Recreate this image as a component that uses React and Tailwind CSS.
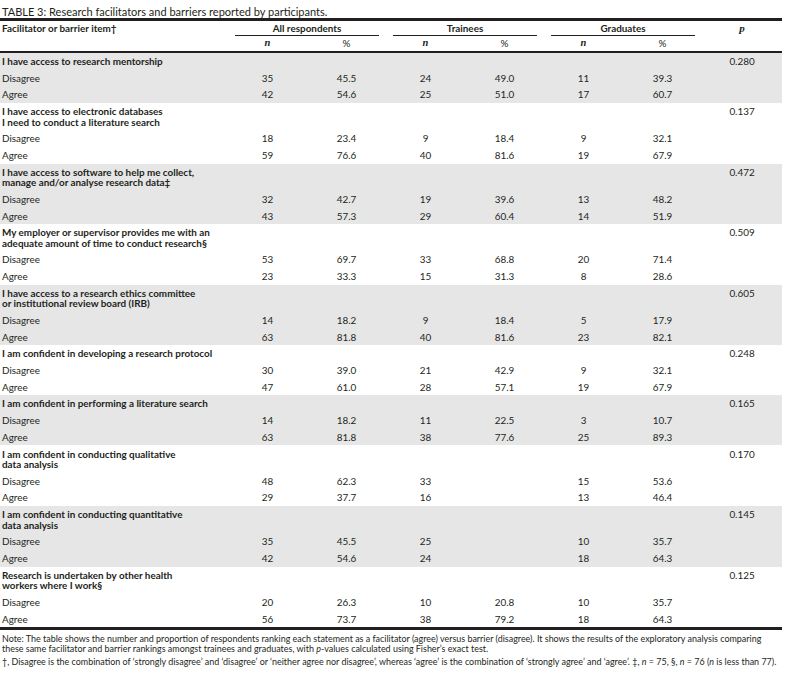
const items = [
  {
    title: ["I have access to research mentorship"],
    p: "0.280",
    disagree: ["35", "45.5", "24", "49.0", "11", "39.3"],
    agree: ["42", "54.6", "25", "51.0", "17", "60.7"],
  },
  {
    title: ["I have access to electronic databases", "I need to conduct a literature search"],
    p: "0.137",
    disagree: ["18", "23.4", "9", "18.4", "9", "32.1"],
    agree: ["59", "76.6", "40", "81.6", "19", "67.9"],
  },
  {
    title: ["I have access to software to help me collect,", "manage and/or analyse research data‡"],
    p: "0.472",
    disagree: ["32", "42.7", "19", "39.6", "13", "48.2"],
    agree: ["43", "57.3", "29", "60.4", "14", "51.9"],
  },
  {
    title: ["My employer or supervisor provides me with an", "adequate amount of time to conduct research§"],
    p: "0.509",
    disagree: ["53", "69.7", "33", "68.8", "20", "71.4"],
    agree: ["23", "33.3", "15", "31.3", "8", "28.6"],
  },
  {
    title: ["I have access to a research ethics committee", "or institutional review board (IRB)"],
    p: "0.605",
    disagree: ["14", "18.2", "9", "18.4", "5", "17.9"],
    agree: ["63", "81.8", "40", "81.6", "23", "82.1"],
  },
  {
    title: ["I am confident in developing a research protocol"],
    p: "0.248",
    disagree: ["30", "39.0", "21", "42.9", "9", "32.1"],
    agree: ["47", "61.0", "28", "57.1", "19", "67.9"],
  },
  {
    title: ["I am confident in performing a literature search"],
    p: "0.165",
    disagree: ["14", "18.2", "11", "22.5", "3", "10.7"],
    agree: ["63", "81.8", "38", "77.6", "25", "89.3"],
  },
  {
    title: ["I am confident in conducting qualitative", "data analysis"],
    p: "0.170",
    disagree: ["48", "62.3", "33", "", "15", "53.6"],
    agree: ["29", "37.7", "16", "", "13", "46.4"],
  },
  {
    title: ["I am confident in conducting quantitative", "data analysis"],
    p: "0.145",
    disagree: ["35", "45.5", "25", "", "10", "35.7"],
    agree: ["42", "54.6", "24", "", "18", "64.3"],
  },
  {
    title: ["Research is undertaken by other health", "workers where I work§"],
    p: "0.125",
    disagree: ["20", "26.3", "10", "20.8", "10", "35.7"],
    agree: ["56", "73.7", "38", "79.2", "18", "64.3"],
  },
];

const sans = "font-['Lato','Open_Sans',sans-serif]";
const serif = "font-['Liberation_Serif',serif] italic font-bold";

function ValueRow({ label, values, shaded }) {
  return (
    <tr className={shaded ? "bg-[#e6e6e6]" : ""}>
      <td className="pl-[2px] py-[3.1px]">{label}</td>
      {values.map((v, i) => (
        <td key={i} className="py-[3.1px] text-center">
          {v}
        </td>
      ))}
      <td className="py-[3.1px]"></td>
    </tr>
  );
}

export default function App() {
  return (
    <div className={`w-[788px] h-[674px] bg-white text-[#231f20] ${sans}`}>
      <div className="pl-[2px] pt-[5px] text-[11px] leading-[13px]">
        TABLE 3: Research facilitators and barriers reported by participants.
      </div>

      <table className="w-[782px] table-fixed border-collapse text-[9.9px] leading-[10.5px]">
        <colgroup>
          <col className="w-[228px]" />
          <col className="w-[79px]" />
          <col className="w-[79px]" />
          <col className="w-[79px]" />
          <col className="w-[79px]" />
          <col className="w-[79px]" />
          <col className="w-[79px]" />
          <col className="w-[80px]" />
        </colgroup>
        <thead className="border-t-[3px] border-b-2 border-[#231f20]">
          {/* Group headers */}
          <tr>
            <th rowSpan={2} className="pl-[2px] pt-[1.5px] text-left align-top font-bold">
              Facilitator or barrier item†
            </th>
            {["All respondents", "Trainees", "Graduates"].map((g) => (
              <th key={g} colSpan={2} className="pt-[1.5px] px-[7px] font-bold">
                <div className="border-b border-[#231f20] pb-[2px]">{g}</div>
              </th>
            ))}
            <th rowSpan={2} className={`pt-[1.5px] align-top text-center text-[11px] ${serif}`}>
              p
            </th>
          </tr>
          {/* n / % */}
          <tr>
            {[0, 1, 2].map((k) => [
              <th key={`n${k}`} className={`pt-[2px] pb-[2.5px] text-center text-[10.5px] ${serif}`}>
                n
              </th>,
              <th key={`p${k}`} className="pt-[2px] pb-[2.5px] text-center font-normal">
                %
              </th>,
            ])}
          </tr>
        </thead>
        <tbody className="border-b-[3px] border-[#231f20]">
          {items.map((item, idx) => {
            const shaded = idx % 2 === 0;
            return [
              <tr key={`t${idx}`} className={shaded ? "bg-[#e6e6e6]" : ""}>
                <td className="pl-[2px] py-[3.1px] font-bold whitespace-nowrap">
                  {item.title.map((line, i) => (
                    <div key={i}>{line}</div>
                  ))}
                </td>
                <td colSpan={6}></td>
                <td className="py-[3.1px] text-center align-top">{item.p}</td>
              </tr>,
              <ValueRow key={`d${idx}`} label="Disagree" values={item.disagree} shaded={shaded} />,
              <ValueRow key={`a${idx}`} label="Agree" values={item.agree} shaded={shaded} />,
            ];
          })}
        </tbody>
      </table>

      {/* Notes */}
      <div className="pl-[2px] pr-[4px] pt-[4px] text-[8.95px] leading-[10px]">
        <p>
          Note: The table shows the number and proportion of respondents ranking each statement as a facilitator
          (agree) versus barrier (disagree). It shows the results of the exploratory analysis comparing{" "}
          <br />
          these same facilitator and barrier rankings amongst trainees and graduates, with <i>p</i>-values
          calculated using Fisher’s exact test.
        </p>
        <p className="mt-[3px] whitespace-nowrap">
          †, Disagree is the combination of ‘strongly disagree’ and ‘disagree’ or ‘neither agree nor disagree’,
          whereas ‘agree’ is the combination of ‘strongly agree’ and ‘agree’. ‡, <i>n</i> = 75, §, <i>n</i> = 76
          (<i>n</i> is less than 77).
        </p>
      </div>
    </div>
  );
}
